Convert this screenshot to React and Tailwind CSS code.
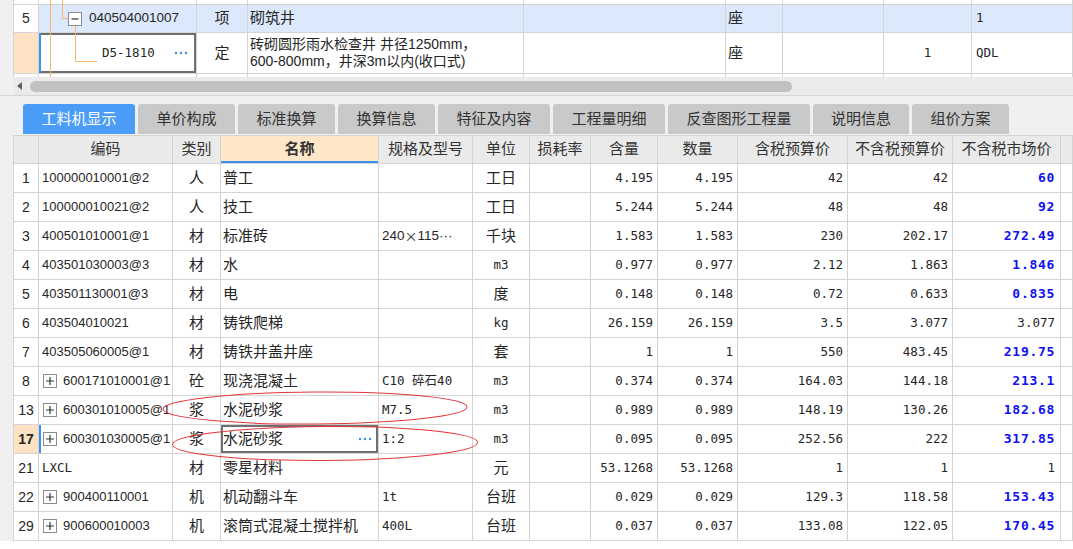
import React from "react";

const GRID =
  "grid grid-cols-[26px_134px_48px_158px_94px_57px_61px_67px_80px_110px_105px_108px_12px]";
const TOPGRID =
  "grid grid-cols-[26px_158px_51px_276px_202px_57px_101px_88px_101px]";

const rows = [
  { n: "1", code: "100000010001@2", t: "人", name: "普工", spec: "", unit: "工日", q1: "4.195", q2: "4.195", a: "42", b: "42", c: "60", blue: true },
  { n: "2", code: "100000010021@2", t: "人", name: "技工", spec: "", unit: "工日", q1: "5.244", q2: "5.244", a: "48", b: "48", c: "92", blue: true },
  { n: "3", code: "400501010001@1", t: "材", name: "标准砖", spec: "brick", unit: "千块", q1: "1.583", q2: "1.583", a: "230", b: "202.17", c: "272.49", blue: true },
  { n: "4", code: "403501030003@3", t: "材", name: "水", spec: "", unit: "m3", um: true, q1: "0.977", q2: "0.977", a: "2.12", b: "1.863", c: "1.846", blue: true },
  { n: "5", code: "403501130001@3", t: "材", name: "电", spec: "", unit: "度", q1: "0.148", q2: "0.148", a: "0.72", b: "0.633", c: "0.835", blue: true },
  { n: "6", code: "403504010021", t: "材", name: "铸铁爬梯", spec: "", unit: "kg", um: true, q1: "26.159", q2: "26.159", a: "3.5", b: "3.077", c: "3.077", blue: false },
  { n: "7", code: "403505060005@1", t: "材", name: "铸铁井盖井座", spec: "", unit: "套", q1: "1", q2: "1", a: "550", b: "483.45", c: "219.75", blue: true },
  { n: "8", plus: true, code: "600171010001@1", t: "砼", name: "现浇混凝土", spec: "C10 碎石40", sm: true, unit: "m3", um: true, q1: "0.374", q2: "0.374", a: "164.03", b: "144.18", c: "213.1", blue: true },
  { n: "13", plus: true, code: "600301010005@1", t: "浆", name: "水泥砂浆", spec: "M7.5", sm: true, unit: "m3", um: true, q1: "0.989", q2: "0.989", a: "148.19", b: "130.26", c: "182.68", blue: true },
  { n: "17", sel: true, plus: true, code: "600301030005@1", t: "浆", name: "水泥砂浆", spec: "1:2", sm: true, unit: "m3", um: true, q1: "0.095", q2: "0.095", a: "252.56", b: "222", c: "317.85", blue: true },
  { n: "21", code: "LXCL", cm: true, t: "材", name: "零星材料", spec: "", unit: "元", q1: "53.1268", q2: "53.1268", a: "1", b: "1", c: "1", blue: false },
  { n: "22", plus: true, code: "900400110001", t: "机", name: "机动翻斗车", spec: "1t", sm: true, unit: "台班", q1: "0.029", q2: "0.029", a: "129.3", b: "118.58", c: "153.43", blue: true },
  { n: "29", plus: true, code: "900600010003", t: "机", name: "滚筒式混凝土搅拌机", spec: "400L", sm: true, unit: "台班", q1: "0.037", q2: "0.037", a: "133.08", b: "122.05", c: "170.45", blue: true },
];

const tabs = [
  { label: "工料机显示", w: "w-[112px]", active: true },
  { label: "单价构成", w: "w-[97px]" },
  { label: "标准换算", w: "w-[97px]" },
  { label: "换算信息", w: "w-[97px]" },
  { label: "特征及内容", w: "w-[112px]" },
  { label: "工程量明细", w: "w-[112px]" },
  { label: "反查图形工程量", w: "w-[142px]" },
  { label: "说明信息", w: "w-[96px]" },
  { label: "组价方案", w: "w-[97px]" },
];

const headers = ["", "编码", "类别", "名称", "规格及型号", "单位", "损耗率", "含量", "数量", "含税预算价", "不含税预算价", "不含税市场价", ""];

function Dots() {
  return (
    <svg width="14" height="4" viewBox="0 0 14 4" className="shrink-0">
      <circle cx="2" cy="2" r="1.2" fill="#3a8ee6" />
      <circle cx="7" cy="2" r="1.2" fill="#3a8ee6" />
      <circle cx="12" cy="2" r="1.2" fill="#3a8ee6" />
    </svg>
  );
}

function PlusBox() {
  return (
    <span className="inline-flex w-[14px] h-[14px] border border-[#8c8c8c] bg-white items-center justify-center shrink-0">
      <svg width="10" height="10" viewBox="0 0 10 10">
        <path d="M1 5h8M5 1v8" stroke="#333" strokeWidth="1.2" />
      </svg>
    </span>
  );
}

function MinusBox() {
  return (
    <span className="inline-flex w-[14px] h-[14px] border border-[#8c8c8c] bg-white items-center justify-center shrink-0">
      <svg width="10" height="10" viewBox="0 0 10 10">
        <path d="M1.5 5h7" stroke="#333" strokeWidth="1.2" />
      </svg>
    </span>
  );
}

const C = "border-r border-[#d4d4d4] flex items-center overflow-hidden whitespace-nowrap";
const MONO = "font-[family-name:'DejaVu_Sans_Mono','Noto_Sans_CJK_SC',monospace] text-[12.5px]";
const NUM = "font-[family-name:'DejaVu_Sans_Mono',monospace] text-[12.5px] justify-end pr-[4px]";

export default function App() {
  return (
    <div className="relative w-[1073px] h-[549px] overflow-hidden bg-white text-[#262626] font-[family-name:'Liberation_Sans','Noto_Sans_CJK_SC',sans-serif]">
      {/* top section */}
      <div className="relative flex h-[77px]">
        <div className="w-[13px] bg-[#f0f0f0] shrink-0" />
        <div className="w-[1060px]">
          <div className={`${TOPGRID} h-[5px] border-b border-[#d4d4d4]`}>
            {Array.from({ length: 9 }).map((_, i) => (
              <div key={i} className={`${C} ${i === 0 ? "border-l" : ""}`} />
            ))}
          </div>
          <div className={`${TOPGRID} h-[28px] border-b border-[#d4d4d4] bg-[#dce8fb]`}>
            <div className={`${C} border-l bg-white justify-center text-[14px]`}>5</div>
            <div className={`${C} pl-[29px] gap-[7px] text-[13.5px]`}>
              <MinusBox />
              <span>040504001007</span>
            </div>
            <div className={`${C} justify-center text-[15px]`}>项</div>
            <div className={`${C} pl-[2px] text-[15px]`}>砌筑井</div>
            <div className={C} />
            <div className={`${C} pl-[2px] text-[15px]`}>座</div>
            <div className={C} />
            <div className={C} />
            <div className={`${C} pl-[4px] ${MONO}`}>1</div>
          </div>
          <div className={`${TOPGRID} h-[41px] border-b border-[#d4d4d4] bg-white`}>
            <div className={`${C} border-l bg-[#fde3c3]`} />
            <div className={`${C} pl-[63px] shadow-[inset_2px_0_0_#3d8ff0,inset_0_0_0_2px_#6f6f6f]`}>
              <span className={MONO}>D5-1810</span>
              <span className="ml-[19px] flex">
                <Dots />
              </span>
            </div>
            <div className={`${C} justify-center text-[15px]`}>定</div>
            <div className={`${C} pl-[2px] text-[14px] leading-[17px] whitespace-normal`}>
              <div>
                <div>砖砌圆形雨水检查井 井径1250mm，</div>
                <div>600-800mm，井深3m以内(收口式)</div>
              </div>
            </div>
            <div className={C} />
            <div className={`${C} pl-[2px] text-[15px]`}>座</div>
            <div className={C} />
            <div className={`${C} justify-center ${MONO}`}>1</div>
            <div className={`${C} pl-[4px] ${MONO}`}>QDL</div>
          </div>
          <div className={`${TOPGRID} h-[3px]`}>
            {Array.from({ length: 9 }).map((_, i) => (
              <div key={i} className={`${C} ${i === 0 ? "border-l" : ""}`} />
            ))}
          </div>
        </div>
        <svg className="absolute left-0 top-0 pointer-events-none" width="200" height="77" viewBox="0 0 200 77">
          <path d="M50.5 0V77" stroke="#f8b56c" strokeWidth="1" fill="none" />
          <path d="M62.5 0V18.5H68" stroke="#f8b56c" strokeWidth="1" fill="none" />
          <path d="M75.5 26V61.5H97" stroke="#f8b56c" strokeWidth="1" fill="none" />
        </svg>
      </div>

      {/* scrollbar */}
      <div className="flex h-[18px] bg-[#ebebeb]">
        <div className="w-[13px] bg-[#f0f0f0]" />
        <div className="flex items-center pl-[4px]">
          <svg width="6" height="8" viewBox="0 0 6 8">
            <path d="M5 0L0 4L5 8Z" fill="#606060" />
          </svg>
        </div>
        <div className="flex items-center ml-[7px]">
          <div className="w-[762px] h-[11px] rounded-full bg-[#c1c1c1]" />
        </div>
      </div>

      {/* tabs */}
      <div className="h-[40px] border-t border-[#d6d6d6] bg-[#f0f0f0] pt-[8px] pl-[23px] flex gap-[3px]">
        {tabs.map((t) => (
          <div
            key={t.label}
            className={`${t.w} h-[30px] rounded-t-[3px] flex items-center justify-center text-[15px] ${
              t.active ? "bg-[#4a9cf6] text-white" : "bg-[#c9c9c9] text-[#333]"
            }`}
          >
            {t.label}
          </div>
        ))}
      </div>

      {/* grid */}
      <div className="flex">
        <div className="w-[13px] bg-[#f0f0f0] shrink-0" />
        <div className="w-[1060px]">
          <div className={`${GRID} h-[29px] border-t border-b border-[#d4d4d4] bg-[#eaeaea]`}>
            {headers.map((h, i) => (
              <div
                key={i}
                className={`${C} justify-center text-[15px] text-[#333] ${i === 0 ? "border-l" : ""} ${
                  i === 3 ? "bg-[#fee6c8] font-bold shadow-[inset_0_-2px_0_#3b8eea]" : ""
                }`}
              >
                {h}
              </div>
            ))}
          </div>
          {rows.map((r) => (
            <div key={r.n} className={`${GRID} h-[29px] border-b border-[#d4d4d4] bg-white`}>
              <div
                className={`${C} border-l justify-center text-[14px] ${
                  r.sel ? "bg-[#fde3c3] font-bold" : ""
                }`}
              >
                {r.n}
              </div>
              <div
                className={`${C} ${r.plus ? "pl-[4px] gap-[6px]" : "pl-[3px]"} ${
                  r.sel ? "shadow-[inset_2px_0_0_#3d8ff0]" : ""
                }`}
              >
                {r.plus && <PlusBox />}
                <span className={r.cm ? MONO : "text-[13px]"}>{r.code}</span>
              </div>
              <div className={`${C} justify-center text-[15px]`}>{r.t}</div>
              <div
                className={`${C} pl-[2px] text-[15px] ${
                  r.sel ? "shadow-[inset_0_0_0_2px_#707070] justify-between pr-[6px]" : ""
                }`}
              >
                <span>{r.name}</span>
                {r.sel && <Dots />}
              </div>
              {r.spec === "brick" ? (
                <div className={`${C} pl-[3px] text-[13.5px]`}>
                  <span>240</span>
                  <span className="font-[family-name:'Noto_Sans_CJK_SC',sans-serif] text-[13px]">×</span>
                  <span>115···</span>
                </div>
              ) : (
                <div className={`${C} pl-[3px] ${r.sm ? MONO : "text-[13px]"}`}>{r.spec}</div>
              )}
              <div className={`${C} justify-center ${r.um ? MONO : "text-[15px]"}`}>{r.unit}</div>
              <div className={C} />
              <div className={`${C} ${NUM}`}>{r.q1}</div>
              <div className={`${C} ${NUM}`}>{r.q2}</div>
              <div className={`${C} ${NUM}`}>{r.a}</div>
              <div className={`${C} ${NUM}`}>{r.b}</div>
              <div
                className={`${C} justify-end pr-[5px] font-[family-name:'DejaVu_Sans_Mono',monospace] ${
                  r.blue ? "text-[13px] font-bold text-[#1010f0] tracking-[0.7px]" : "text-[12.5px]"
                }`}
              >
                {r.c}
              </div>
              <div className={C} />
            </div>
          ))}
        </div>
      </div>

      {/* annotation ellipses */}
      <svg
        className="absolute left-0 top-0 pointer-events-none"
        width="1073"
        height="549"
        viewBox="0 0 1073 549"
      >
        <ellipse cx="315" cy="408" rx="152" ry="16" transform="rotate(-0.4 315 408)" fill="none" stroke="#e5363a" strokeWidth="1" />
        <ellipse cx="325" cy="443.5" rx="152.5" ry="17" transform="rotate(-0.4 325 443.5)" fill="none" stroke="#e5363a" strokeWidth="1" />
      </svg>
    </div>
  );
}
